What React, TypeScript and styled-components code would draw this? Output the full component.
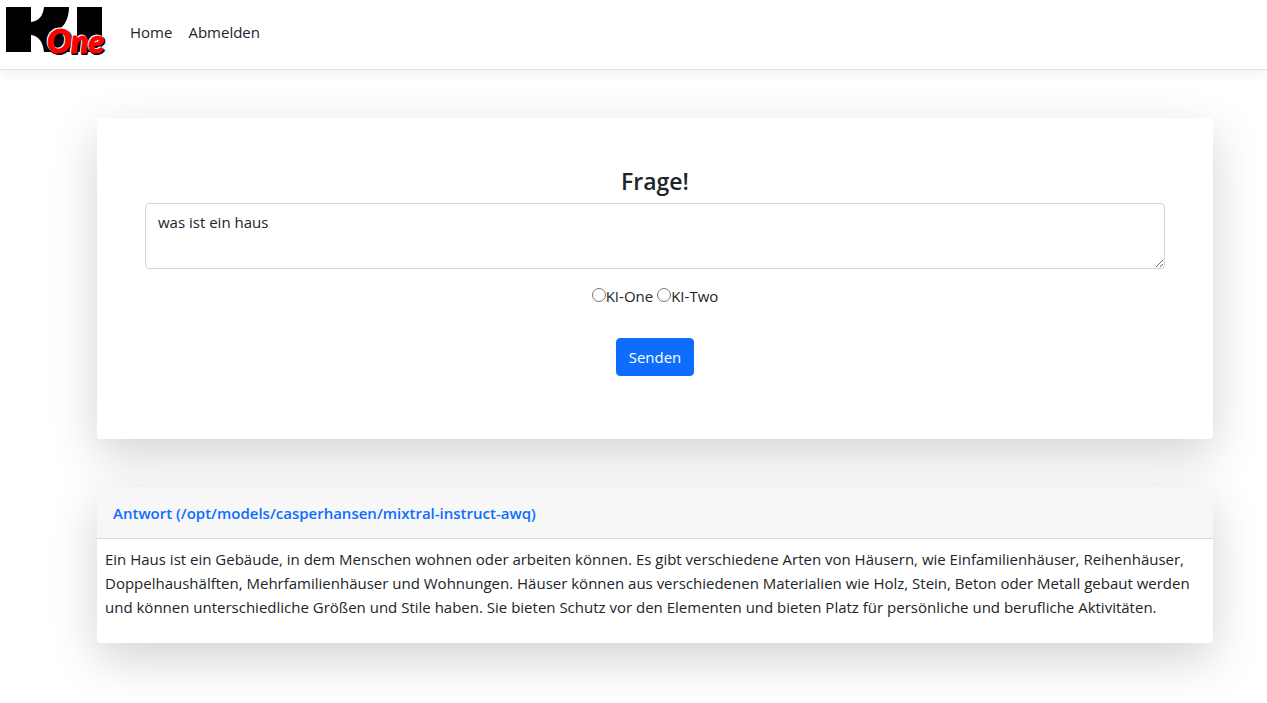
import React from 'react';
import styled, { createGlobalStyle } from 'styled-components';

const GlobalStyle = createGlobalStyle`
  *, *::before, *::after { box-sizing: border-box; }
  body {
    margin: 0;
    background: #fff;
    color: #212529;
    font-family: 'Segoe UI', 'Open Sans', 'Noto Sans', sans-serif;
    font-size: 15px;
    line-height: 24px;
  }
`;

const Navbar = styled.header`
  display: flex;
  align-items: flex-start;
  padding: 7px 6px 6px;
  border-bottom: 1px solid #dee2e6;
  box-shadow: 0 4px 12px rgba(0, 0, 0, 0.06);
`;

const Brand = styled.a`
  display: flex;
  margin-right: 12px;
`;

const Nav = styled.nav`
  display: flex;
  padding-top: 5px;
`;

const NavLink = styled.a`
  padding: 8px;
  color: #212529;
  text-decoration: none;
`;

const Main = styled.main`
  display: flex;
  flex-direction: column;
  gap: 48px;
  padding: 48px 54px 60px 97px;
`;

const Card = styled.section`
  background: #fff;
  border-radius: 4px;
  box-shadow: 0 16px 48px rgba(0, 0, 0, 0.175);
`;

const QuestionForm = styled.form`
  display: flex;
  flex-direction: column;
  align-items: center;
  padding: 48px 48px 63px;
`;

const Title = styled.label`
  margin-bottom: 6px;
  font-size: 23px;
  font-weight: 600;
  line-height: 31px;
`;

const QuestionInput = styled.textarea`
  display: block;
  width: 100%;
  height: 66px;
  margin-bottom: 15px;
  padding: 6px 12px;
  border: 1px solid #ced4da;
  border-radius: 4px;
  background: #fff;
  color: inherit;
  font: inherit;
  resize: vertical;
`;

const Options = styled.div`
  display: flex;
  gap: 4px;
  margin-bottom: 30px;
`;

const Option = styled.label`
  display: flex;
  align-items: center;
`;

const Radio = styled.input`
  width: 14px;
  height: 14px;
  margin: 0 0 2px;
`;

const SubmitButton = styled.button`
  padding: 6px 12px;
  border: 1px solid #0d6efd;
  border-radius: 4px;
  background: #0d6efd;
  color: #fff;
  font: inherit;
`;

const CardHeader = styled.header`
  padding: 14px 16px 13px;
  border-bottom: 1px solid #d9d9d9;
  border-radius: 4px 4px 0 0;
  background: #f7f7f7;
`;

const AnswerTitle = styled.h2`
  margin: 0;
  color: #0d6efd;
  font-size: 15px;
  font-weight: 600;
  line-height: 24px;
`;

const CardBody = styled.div`
  padding: 8px 8px 24px;
`;

const Answer = styled.p`
  margin: 0;
`;

function Logo() {
  return (
    <svg width="104" height="56" viewBox="0 0 104 56" role="img" aria-label="KI One">
      <rect x="0" y="0" width="25" height="45" />
      <path d="M25 15 C33 14 37 9 38 0 H63 C63 13 57 23 47 24 C57 26 63 33 64 45 H38 C37 35 33 29 25 28 Z" />
      <rect x="71" y="0" width="25" height="45" />
      <g fontFamily="Lato, sans-serif" fontWeight="900" fontStyle="italic" fontSize="32" strokeLinejoin="round">
        <text x="42" y="47" fill="#000" stroke="#000" strokeWidth="2">One</text>
        <text x="40" y="45" fill="#fff" stroke="#fff" strokeWidth="1">One</text>
        <text x="41" y="46" fill="#f00" stroke="#f00" strokeWidth="1">One</text>
      </g>
    </svg>
  );
}

const models = ['KI-One', 'KI-Two'];

export default function App() {
  return (
    <>
      <GlobalStyle />
      <Navbar>
        <Brand href="#"><Logo /></Brand>
        <Nav>
          <NavLink href="#">Home</NavLink>
          <NavLink href="#">Abmelden</NavLink>
        </Nav>
      </Navbar>
      <Main>
        <Card>
          <QuestionForm onSubmit={(e) => e.preventDefault()}>
            <Title htmlFor="question">Frage!</Title>
            <QuestionInput id="question" defaultValue="was ist ein haus" />
            <Options>
              {models.map((model) => (
                <Option key={model}>
                  <Radio type="radio" name="model" value={model} />
                  {model}
                </Option>
              ))}
            </Options>
            <SubmitButton type="submit">Senden</SubmitButton>
          </QuestionForm>
        </Card>
        <Card>
          <CardHeader>
            <AnswerTitle>Antwort (/opt/models/casperhansen/mixtral-instruct-awq)</AnswerTitle>
          </CardHeader>
          <CardBody>
            <Answer>
              Ein Haus ist ein Gebäude, in dem Menschen wohnen oder arbeiten können. Es gibt
              verschiedene Arten von Häusern, wie Einfamilienhäuser, Reihenhäuser,
              Doppelhaushälften, Mehrfamilienhäuser und Wohnungen. Häuser können aus verschiedenen
              Materialien wie Holz, Stein, Beton oder Metall gebaut werden und können
              unterschiedliche Größen und Stile haben. Sie bieten Schutz vor den Elementen und
              bieten Platz für persönliche und berufliche Aktivitäten.
            </Answer>
          </CardBody>
        </Card>
      </Main>
    </>
  );
}
